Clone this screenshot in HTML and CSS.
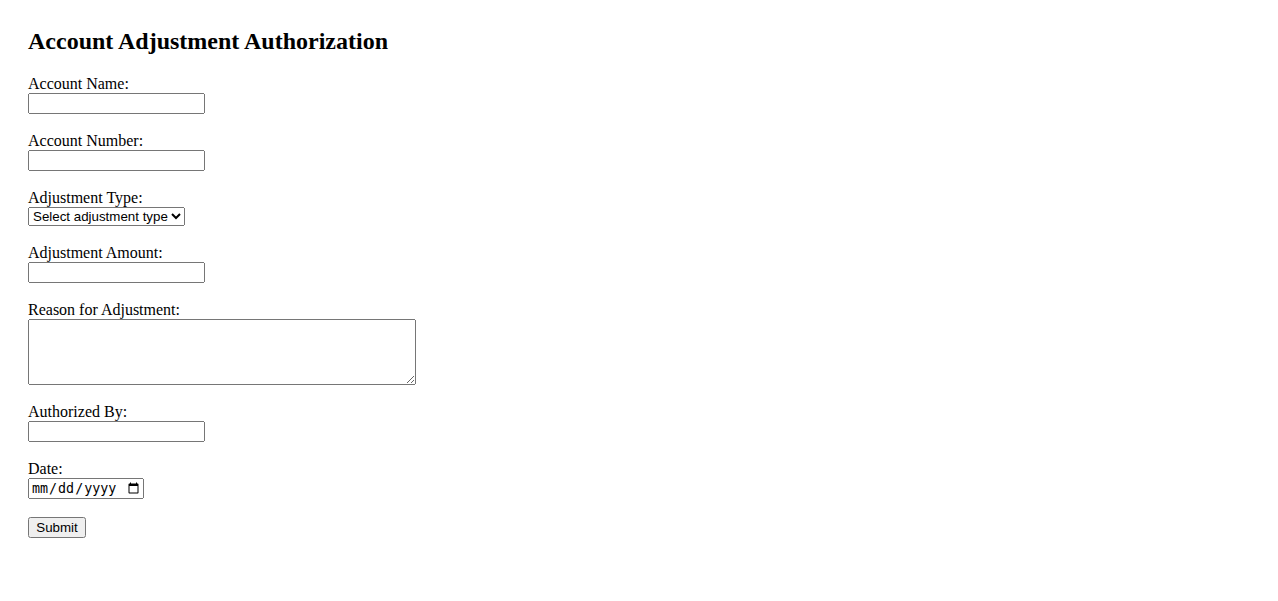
FILE: index.html
```html
<!DOCTYPE html>
<html>
<head>
<meta charset="utf-8">
<title>Account Adjustment Authorization</title>
<link rel="stylesheet" href="styles.css">
</head>
<body>
<h2 class="title">Account Adjustment Authorization</h2>
<form class="form">
<label for="accountName">Account Name:</label><br>
<input class="field" type="text" id="accountName" name="accountName"><br><br>
<label for="accountNumber">Account Number:</label><br>
<input class="field" type="text" id="accountNumber" name="accountNumber"><br><br>
<label for="adjustmentType">Adjustment Type:</label><br>
<select id="adjustmentType" name="adjustmentType">
<option value="">Select adjustment type</option>
<option value="credit">Credit</option>
<option value="debit">Debit</option>
</select><br><br>
<label for="adjustmentAmount">Adjustment Amount:</label><br>
<input class="field" type="text" id="adjustmentAmount" name="adjustmentAmount"><br><br>
<label for="reason">Reason for Adjustment:</label><br>
<textarea class="reason" id="reason" name="reason" rows="4" cols="50"></textarea><br><br>
<label for="authorizedBy">Authorized By:</label><br>
<input class="field" type="text" id="authorizedBy" name="authorizedBy"><br><br>
<label for="date">Date:</label><br>
<input class="date" type="date" id="date" name="date"><br><br>
<input class="submit" type="submit" value="Submit">
</form>
</body>
</html>
```
FILE: styles.css
```css
body {
  margin: 0;
  padding: 28px;
  font-family: "Liberation Serif", "Times New Roman", serif;
  font-size: 16px;
  color: #000;
  background: #fff;
}
.title {
  margin: 0 0 0.83em;
  font-size: 1.5em;
  font-weight: bold;
}
.form {
  margin: 0;
}
.field {
  box-sizing: border-box;
  width: 177px;
}
.reason {
  box-sizing: border-box;
  width: 388px;
  height: 66px;
  vertical-align: bottom;
}
.date {
  box-sizing: border-box;
  width: 116px;
}
.submit {
  width: 58px;
}
```
